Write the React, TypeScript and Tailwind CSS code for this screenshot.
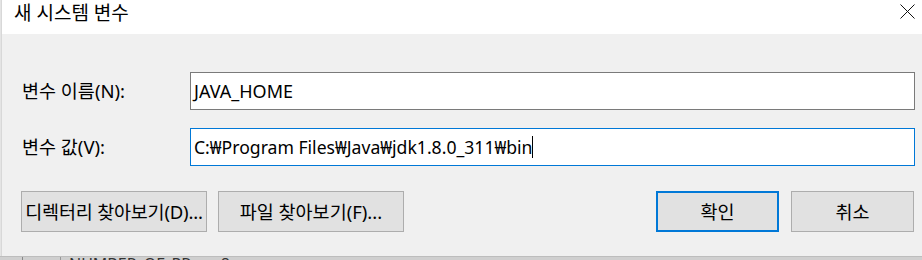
import React from "react";

const font = { fontFamily: '"Noto Sans", "Noto Sans CJK KR", sans-serif' };

export default function App() {
  return (
    <div
      className="w-[922px] h-[260px] overflow-hidden flex flex-col bg-[#f0f0f0] text-black"
      style={font}
    >
      <div className="flex flex-1 min-h-0">
        {/* left strip of background window */}
        <div className="w-[2px] bg-[#e4e4e4] border-r border-[#d8d8d8]" />
        <div className="flex-1 flex flex-col">
          {/* title bar */}
          <div className="h-[34px] bg-white flex items-start justify-between">
            <div className="pl-[12px] pt-[0px] text-[19px] leading-[26px]">
              새 시스템 변수
            </div>
            <div className="pt-[4px] pr-[7px]">
              <svg width="15" height="15" viewBox="0 0 15 15">
                <path d="M0.5 0.5 L14.5 14.5 M14.5 0.5 L0.5 14.5" stroke="#111" strokeWidth="1" fill="none" />
              </svg>
            </div>
          </div>
          {/* body */}
          <div className="flex-1 flex flex-col pt-[38px] pr-[7px]">
            <div className="flex items-center h-[38px]">
              <div className="w-[188px] pl-[20px] text-[18.5px]">변수 이름(N):</div>
              <div className="flex-1 h-[38px] bg-white border border-[#7a7a7a] flex items-center pl-[3px] text-[18px]">
                JAVA_HOME
              </div>
            </div>
            <div className="flex items-center h-[38px] mt-[18px]">
              <div className="w-[188px] pl-[20px] text-[18.5px]">변수 값(V):</div>
              <div className="flex-1 h-[38px] bg-white border border-[#0078d7] flex items-center pl-[3px] text-[17.6px]">
                <span>C:₩Program Files₩Java₩jdk1.8.0_311₩bin</span>
                <span className="w-[1px] h-[22px] bg-black" />
              </div>
            </div>
            <div className="flex items-center mt-[25px] pl-[19px] pr-[1px]">
              <div className="w-[186px] h-[41px] bg-[#e1e1e1] border border-[#adadad] flex items-center justify-center text-[18.5px] whitespace-nowrap tracking-[-0.2px]">
                디렉터리 찾아보기(D)...
              </div>
              <div className="w-[186px] h-[41px] ml-[11px] bg-[#e1e1e1] border border-[#adadad] flex items-center justify-center text-[18.5px] whitespace-nowrap">
                파일 찾아보기(F)...
              </div>
              <div className="flex-1" />
              <div className="w-[123px] h-[41px] bg-[#e1e1e1] border-2 border-[#0078d7] flex items-center justify-center text-[18.5px]">
                확인
              </div>
              <div className="w-[123px] h-[41px] ml-[12px] bg-[#e1e1e1] border border-[#adadad] flex items-center justify-center text-[18.5px]">
                취소
              </div>
            </div>
          </div>
        </div>
      </div>
      {/* background window peeking below */}
      <div className="h-[4px] bg-[#cfcfcf] border-t border-[#bdbdbd] overflow-hidden flex items-start relative">
        <div className="w-[23px] h-full border-r border-[#888]" />
        <div className="w-[38px] h-full border-r border-[#999]" />
        <div className="pl-[8px] -mt-[2px] text-[16px] leading-[18px] text-[#333] whitespace-nowrap">
          NUMBER_OF_PR...&nbsp;&nbsp;&nbsp;&nbsp;8
        </div>
      </div>
    </div>
  );
}
